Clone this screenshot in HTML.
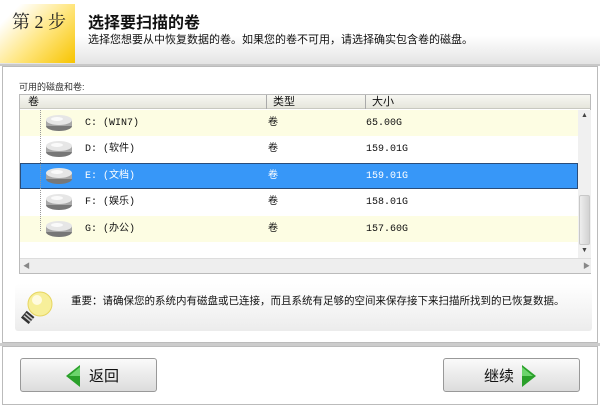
<!DOCTYPE html>
<html><head><meta charset="utf-8"><style>
*{margin:0;padding:0;box-sizing:border-box}
body{width:600px;height:407px;background:#fff;font-family:"Liberation Sans","Noto Sans CJK SC",sans-serif;position:relative;overflow:hidden;font-size:11px;color:#111}
.abs{position:absolute}
.hdr{left:0;top:0;width:600px;height:64px;background:linear-gradient(#fff 0%,#fff 55%,#e4e4e4 100%)}
.step{left:0;top:4px;width:75px;height:59px;background:linear-gradient(135deg,#fff 15%,#ffe680 55%,#f7c400 100%);font-family:"Liberation Serif","Noto Serif CJK SC",serif;font-size:18px;padding:4px 0 0 12px;color:#222;white-space:pre}
.title{left:88px;top:9px;font-size:16px;font-weight:bold}
.sub{left:88px;top:31px;font-size:11px}
.panel{left:2px;top:66px;width:596px;height:277px;border:1px solid #bbb;background:#fff}
.tbl{left:19px;top:94px;width:572px;height:180px;border:1px solid #bbb;background:#fff}
.th{left:0;top:0;width:570px;height:14px;background:linear-gradient(#f7f7f2,#e6e6dc);border-bottom:1px solid #c8c8c0;font-size:11px;line-height:14px}
.row{left:0;width:558px;height:26px;line-height:26px}
.disk{position:absolute;left:26px;top:5px;width:28px;height:18px}
.tip{left:15px;top:284px;width:577px;height:47px;background:linear-gradient(#fff,#ececec);border-radius:3px}
.btn{height:34px;border:1px solid #999;border-radius:3px;background:linear-gradient(#fafafa,#dcdcdc);font-size:15px}
.r{position:absolute;height:26px;line-height:29px;width:560px}
</style></head><body>
<div class="abs hdr"></div>
<div class="abs step">第 2 步</div>
<div class="abs title">选择要扫描的卷</div>
<div class="abs sub">选择您想要从中恢复数据的卷。如果您的卷不可用，请选择确实包含卷的磁盘。</div>
<div class="abs" style="left:0;top:64px;width:600px;height:2px;background:#c8c8c8"></div>
<div class="abs panel"></div>
<div class="abs" style="left:19px;top:80px;font-size:9px;color:#333">可用的磁盘和卷:</div>
<div class="abs tbl">
 <div class="abs th"><span class="abs" style="left:8px">卷</span><span class="abs" style="left:246px;top:0;height:14px;border-left:1px solid #aaa;padding-left:6px">类型</span><span class="abs" style="left:345px;top:0;height:14px;border-left:1px solid #aaa;padding-left:6px">大小</span></div>
 <div class="abs" style="left:0;top:15px;width:558px;height:148px">
  <div class="abs row" style="top:0;background:#fdfde3"></div>
  <div class="abs row" style="top:26px;background:#fff"></div>
  <div class="abs row" style="top:53px;background:#3797f8;border:1px solid #2a4d7a"></div>
  <div class="abs row" style="top:79px;background:#fff"></div>
  <div class="abs row" style="top:106px;background:#fdfde3"></div>
  <div class="abs" style="left:20px;top:0;height:121px;border-left:1px dotted #999"></div>
 </div>
 <div class="abs" style="left:558px;top:15px;width:13px;height:148px;background:#f0f0f0"><div class="abs" style="left:1px;top:85px;width:11px;height:50px;background:linear-gradient(90deg,#eee,#d2d2d2);border:1px solid #c8c8c8;border-radius:2px"></div><div class="abs" style="left:3px;top:2px;font-size:7px;color:#444">▲</div><div class="abs" style="left:3px;top:137px;font-size:7px;color:#444">▼</div></div>
 <div class="abs" style="left:0;top:163px;width:571px;height:15px;background:#eee;border-top:1px solid #ddd"><span class="abs" style="left:3px;top:2px;font-size:7px;color:#888">◀</span><span class="abs" style="left:563px;top:2px;font-size:7px;color:#888">▶</span></div>
</div>
<div class="abs" style="left:19px;top:109px;width:560px;height:133px;font-family:'Liberation Mono','Noto Sans CJK SC',monospace;font-size:10px">
 <div class="r" style="top:0"><svg class="disk" viewBox="0 0 28 18"><ellipse cx="14" cy="12" rx="13" ry="5" fill="#777"/><rect x="1" y="6" width="26" height="6" fill="#a8a8a8"/><ellipse cx="14" cy="6" rx="13" ry="5" fill="#e6e6e6"/><ellipse cx="12" cy="5" rx="6" ry="2" fill="#fafafa"/></svg><span class="abs" style="left:66px">C: (WIN7)</span><span class="abs" style="left:249px">卷</span><span class="abs" style="left:347px">65.00G</span></div>
 <div class="r" style="top:26px"><svg class="disk" viewBox="0 0 28 18"><ellipse cx="14" cy="12" rx="13" ry="5" fill="#777"/><rect x="1" y="6" width="26" height="6" fill="#a8a8a8"/><ellipse cx="14" cy="6" rx="13" ry="5" fill="#e6e6e6"/><ellipse cx="12" cy="5" rx="6" ry="2" fill="#fafafa"/></svg><span class="abs" style="left:66px">D: (软件)</span><span class="abs" style="left:249px">卷</span><span class="abs" style="left:347px">159.01G</span></div>
 <div class="r" style="top:53px;color:#fff"><svg class="disk" viewBox="0 0 28 18"><ellipse cx="14" cy="12" rx="13" ry="5" fill="#777"/><rect x="1" y="6" width="26" height="6" fill="#a8a8a8"/><ellipse cx="14" cy="6" rx="13" ry="5" fill="#e6e6e6"/><ellipse cx="12" cy="5" rx="6" ry="2" fill="#fafafa"/></svg><span class="abs" style="left:66px">E: (文档)</span><span class="abs" style="left:249px">卷</span><span class="abs" style="left:347px">159.01G</span></div>
 <div class="r" style="top:79px"><svg class="disk" viewBox="0 0 28 18"><ellipse cx="14" cy="12" rx="13" ry="5" fill="#777"/><rect x="1" y="6" width="26" height="6" fill="#a8a8a8"/><ellipse cx="14" cy="6" rx="13" ry="5" fill="#e6e6e6"/><ellipse cx="12" cy="5" rx="6" ry="2" fill="#fafafa"/></svg><span class="abs" style="left:66px">F: (娱乐)</span><span class="abs" style="left:249px">卷</span><span class="abs" style="left:347px">158.01G</span></div>
 <div class="r" style="top:106px"><svg class="disk" viewBox="0 0 28 18"><ellipse cx="14" cy="12" rx="13" ry="5" fill="#777"/><rect x="1" y="6" width="26" height="6" fill="#a8a8a8"/><ellipse cx="14" cy="6" rx="13" ry="5" fill="#e6e6e6"/><ellipse cx="12" cy="5" rx="6" ry="2" fill="#fafafa"/></svg><span class="abs" style="left:66px">G: (办公)</span><span class="abs" style="left:249px">卷</span><span class="abs" style="left:347px">157.60G</span></div>
</div>
<div class="abs tip"></div>
<svg class="abs" style="left:18px;top:289px" width="40" height="40" viewBox="0 0 40 40"><circle cx="22" cy="15" r="12" fill="#f7ef9a" stroke="#e6d560"/><circle cx="19" cy="11" r="5" fill="#fffbe0"/><rect x="5" y="24" width="10" height="9" transform="rotate(40 10 28)" fill="#333"/><rect x="6" y="26" width="9" height="1.5" transform="rotate(40 10 28)" fill="#ccc"/><rect x="6" y="29" width="9" height="1.5" transform="rotate(40 10 28)" fill="#ccc"/></svg>
<div class="abs" style="left:71px;top:293px;font-size:10.5px">重要：请确保您的系统内有磁盘或已连接，而且系统有足够的空间来保存接下来扫描所找到的已恢复数据。</div>
<div class="abs" style="left:0;top:343px;width:600px;height:3px;background:#ccc"></div>
<div class="abs" style="left:2px;top:346px;width:596px;height:59px;border:1px solid #bbb;background:#fff"></div>
<div class="abs btn" style="left:20px;top:358px;width:137px"><svg class="abs" style="left:44px;top:6px" width="16" height="22"><polygon points="15,0 15,22 1,11" fill="#2aa02a"/><polygon points="15,2 15,11 4,11" fill="#6cd46c"/></svg><span class="abs" style="left:68px;top:6px">返回</span></div>
<div class="abs btn" style="left:443px;top:358px;width:137px"><span class="abs" style="left:40px;top:6px">继续</span><svg class="abs" style="left:77px;top:6px" width="16" height="22"><polygon points="1,0 1,22 15,11" fill="#2aa02a"/><polygon points="1,2 1,11 12,11" fill="#6cd46c"/></svg></div>
</body></html>
